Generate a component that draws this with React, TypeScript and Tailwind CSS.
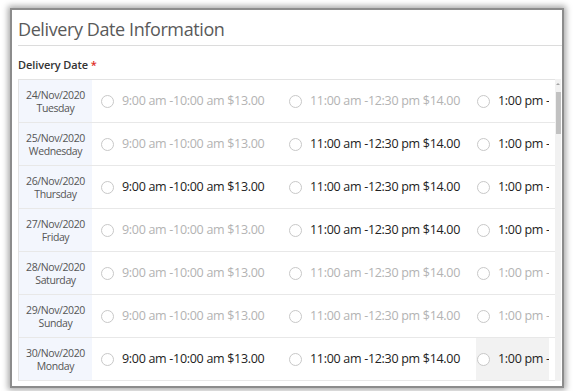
import React from 'react';

interface Slot {
    label: string;
    enabled: boolean;
}

interface DayRow {
    date: string;
    day: string;
    slots: boolean[];
    hoverLast?: boolean;
}

const slotLabels: string[] = [
    '9:00 am -10:00 am $13.00',
    '11:00 am -12:30 pm $14.00',
    '1:00 pm -1:30 pm $15.00',
];

const rows: DayRow[] = [
    { date: '24/Nov/2020', day: 'Tuesday', slots: [false, false, true] },
    { date: '25/Nov/2020', day: 'Wednesday', slots: [false, true, true] },
    { date: '26/Nov/2020', day: 'Thursday', slots: [true, true, true] },
    { date: '27/Nov/2020', day: 'Friday', slots: [false, true, true] },
    { date: '28/Nov/2020', day: 'Saturday', slots: [false, false, false] },
    { date: '29/Nov/2020', day: 'Sunday', slots: [false, false, false] },
    { date: '30/Nov/2020', day: 'Monday', slots: [true, true, true], hoverLast: true },
];

const SlotCell: React.FC<{ slot: Slot; hover?: boolean }> = ({ slot, hover }) => (
    <div className="shrink-0 w-[188px] h-full pl-[8px] flex">
        <div className={`flex items-center h-full w-full pl-[1px] ${hover ? 'bg-[#f2f2f2]' : ''}`}>
            <span className="w-[13px] h-[13px] rounded-full border border-[#c8c8c8] bg-white shrink-0" />
            <span
                className={`ml-[8px] text-[12.5px] tracking-[-0.3px] whitespace-nowrap ${slot.enabled ? 'text-[#222]' : 'text-[#b3b3b3]'}`}
            >
                {slot.label}
            </span>
        </div>
    </div>
);

const App: React.FC = () => {
    return (
        <div className="w-[574px] h-[391px] bg-white overflow-hidden pt-[8px] pl-[10px] font-['Open_Sans',sans-serif]">
            <div className="w-[554px] h-[380px] border-2 border-[#8c8c8c] bg-white shadow-[0_0_6px_2px_rgba(0,0,0,0.35)] overflow-hidden">
                <div className="h-[35px] pl-[6px] pt-[2px] flex items-center text-[18px] tracking-[-0.4px] text-[#5a5a5a] leading-none">
                    Delivery Date Information
                </div>
                <div className="ml-[6px] border-t border-[#dcdcdc]" />
                <div className="pl-[6px] pt-[11px] h-[33px] text-[11px] tracking-[-0.1px] font-semibold text-[#333]">
                    Delivery Date <span className="text-[#e02b27]">*</span>
                </div>
                <div className="ml-[6px] flex">
                    <div className="w-[537px] border-t border-l border-[#e3e3e3]">
                        {rows.map((row) => (
                            <div key={row.date} className="flex h-[43px] border-b border-[#e8e8e8]">
                                <div className="w-[73px] shrink-0 bg-[#f3f6fd] flex flex-col items-center justify-center pt-[1px] text-[10.5px] tracking-[-0.4px] leading-[13px] text-[#555]">
                                    <span>{row.date}</span>
                                    <span>{row.day}</span>
                                </div>
                                <div className="w-[457px] flex overflow-hidden">
                                    {row.slots.map((enabled, i) => (
                                        <SlotCell
                                            key={i}
                                            slot={{ label: slotLabels[i], enabled }}
                                            hover={row.hoverLast && i === 2}
                                        />
                                    ))}
                                </div>
                            </div>
                        ))}
                    </div>
                    <div className="w-[6px] bg-[#f1f1f1] flex flex-col items-center">
                        <svg width="6" height="6" viewBox="0 0 6 6" className="mt-[2px]">
                            <path d="M1 4 L3 2 L5 4 Z" fill="#a3a3a3" />
                        </svg>
                        <div className="w-[5px] h-[42px] mt-[5px] bg-[#c1c1c1]" />
                    </div>
                </div>
            </div>
        </div>
    );
};

export default App;
